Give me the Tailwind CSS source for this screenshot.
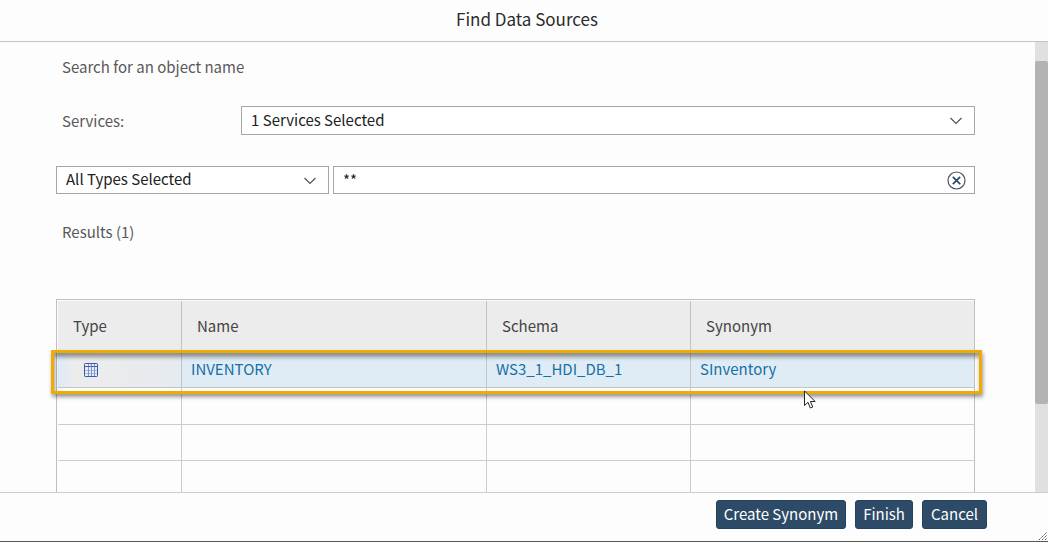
<!DOCTYPE html>
<html lang="en">
<head>
<meta charset="utf-8">
<meta name="viewport" content="width=device-width, initial-scale=1">
<title>Find Data Sources</title>
<script src="https://cdn.jsdelivr.net/npm/@tailwindcss/browser@4"></script>
</head>
<body class="flex h-screen flex-col overflow-hidden border-b border-[#555] bg-[#fdfdfd] font-['Noto_Sans_CJK_SC','Noto_Sans',sans-serif] text-[15px] leading-5 text-[#595959]">
  <header class="flex h-[42px] shrink-0 items-center justify-center border-b border-[#c4c4c4] pb-1 pl-1.5">
    <h1 class="text-[17px] leading-5 text-[#2b2b2b]">Find Data Sources</h1>
  </header>

  <div class="flex min-h-0 flex-1">
    <main class="min-w-0 flex-1 overflow-hidden pt-[15px] pr-[60px] pl-14">
      <p class="pl-1.5">Search for an object name</p>

      <div class="mt-[29px] flex items-center pl-1.5">
        <label for="services" class="w-[179px] shrink-0">Services:</label>
        <div class="relative flex-1">
          <select id="services" class="block h-[29px] w-full appearance-none border border-[#a6a6a6] bg-white pr-10 pb-0.5 pl-[9px] text-[#222]">
            <option>1 Services Selected</option>
          </select>
          <svg class="pointer-events-none absolute top-[11px] right-[13px] h-2 w-3" viewBox="0 0 12 8" fill="none" stroke="#4a4f57" stroke-width="1.1" aria-hidden="true"><path d="M.5 1 6 6.500 11.500 1"/></svg>
        </div>
      </div>

      <div class="mt-[31px] flex gap-1">
        <div class="relative w-[273px] shrink-0">
          <select id="types" aria-label="Object types" class="block h-7 w-full appearance-none border border-[#a6a6a6] bg-white pr-10 pb-0.5 pl-[9px] text-[#222]">
            <option>All Types Selected</option>
          </select>
          <svg class="pointer-events-none absolute top-[11px] right-[13px] h-2 w-3" viewBox="0 0 12 8" fill="none" stroke="#4a4f57" stroke-width="1.1" aria-hidden="true"><path d="M.5 1 6 6.500 11.500 1"/></svg>
        </div>
        <div class="flex h-7 min-w-0 flex-1 items-center border border-[#a6a6a6] bg-white pr-2 pl-[9px]">
          <input type="text" aria-label="Object name" value="**" class="min-w-0 flex-1 bg-transparent text-[#222] outline-none">
          <button type="button" aria-label="Clear search">
            <svg class="block size-[19px]" viewBox="0 0 19 19" fill="none" aria-hidden="true"><circle cx="9.500" cy="9.500" r="8.500" stroke="#4a5260" stroke-width="1.200"/><path d="m5.800 5.800 7.400 7.400M13.200 5.800l-7.400 7.400" stroke="#2c4a6b" stroke-width="1.700"/></svg>
          </button>
        </div>
      </div>

      <h2 class="mt-7 pl-1.5">Results (1)</h2>

      <div class="relative mt-[57px]">
        <table class="w-full table-fixed border-separate border-spacing-0 border border-[#bfbfbf] pt-px pl-px text-left">
          <colgroup><col class="w-[124px]"><col class="w-[305px]"><col class="w-[204px]"><col></colgroup>
          <thead class="bg-[#ececec] text-[#444]">
            <tr class="h-[51px]">
              <th class="border-r border-[#c4c4c4] pb-0.5 pl-[15px] font-normal">Type</th>
              <th class="border-r border-[#c4c4c4] pb-0.5 pl-[15px] font-normal">Name</th>
              <th class="border-r border-[#c4c4c4] pb-0.5 pl-[15px] font-normal">Schema</th>
              <th class="pb-0.5 pl-[15px] font-normal">Synonym</th>
            </tr>
          </thead>
          <tbody>
            <tr class="h-9 bg-[#e0ecf5] text-[#1770a6]">
              <td class="border-r border-b border-[#c4c4c4] bg-linear-to-r from-[#e0ecf5] from-5% via-[#ececec] via-12% to-[#e6ebf0] pl-[26px]">
                <svg class="block size-3.5" viewBox="0 0 14 14" role="img" aria-label="Table"><path fill="#e4ebf8" d="M.5.5h13v13H.5z"/><path fill="none" stroke="#a9badf" d="M1 7.500h12M1 10.500h12"/><path fill="none" stroke="#7f96cc" d="M4.500 1v12M7.500 1v12M10.500 1v12"/><path fill="none" stroke="#4a62a6" d="M1 3.500h12"/><rect x=".5" y=".5" width="13" height="13" rx=".8" fill="none" stroke="#3d58a5"/></svg>
              </td>
              <td class="border-r border-b border-[#c4c4c4] pb-0.5 pl-[9px]">INVENTORY</td>
              <td class="border-r border-b border-[#c4c4c4] pb-0.5 pl-[9px]">WS3_1_HDI_DB_1</td>
              <td class="border-b border-[#c4c4c4] pb-0.5 pl-[9px]">SInventory</td>
            </tr>
            <tr class="h-[37px]"><td class="border-r border-b border-[#ccc]"></td><td class="border-r border-b border-[#ccc]"></td><td class="border-r border-b border-[#ccc]"></td><td class="border-b border-[#ccc]"></td></tr>
            <tr class="h-9"><td class="border-r border-b border-[#ccc]"></td><td class="border-r border-b border-[#ccc]"></td><td class="border-r border-b border-[#ccc]"></td><td class="border-b border-[#ccc]"></td></tr>
            <tr class="h-9"><td class="border-r border-b border-[#ccc]"></td><td class="border-r border-b border-[#ccc]"></td><td class="border-r border-b border-[#ccc]"></td><td class="border-b border-[#ccc]"></td></tr>
          </tbody>
        </table>
        <div class="pointer-events-none absolute top-[51px] -right-[7px] -left-[5px] h-11 border-3 border-[#f0ab00] shadow-[1px_3px_4px_rgb(0_0_0/0.4),inset_1px_4px_4px_rgb(0_0_0/0.4)]"></div>
        <svg class="pointer-events-none absolute top-[91px] left-[748px] h-[19px] w-3" viewBox="0 0 12 19" aria-hidden="true"><path d="M.5 1v14.500L4 12.300l2.300 5.700 2.500-1-2.400-5.500h4.800z" fill="#fff" stroke="#22252b"/></svg>
      </div>
    </main>
    <div class="w-[13px] shrink-0 bg-[#e0e0e0] pt-[19px]" aria-hidden="true">
      <div class="h-[343px] rounded-xs bg-[#b3b3b3]"></div>
    </div>
  </div>

  <footer class="relative flex h-[49px] shrink-0 justify-end gap-[9px] border-t border-[#ccc] pt-[7px] pr-[61px] text-white">
    <button type="button" class="h-[29px] rounded-[3px] border border-[#24415f] bg-[#2d4a67] px-[7px] pb-px">Create Synonym</button>
    <button type="button" class="h-[29px] rounded-[3px] border border-[#24415f] bg-[#2d4a67] px-[7px] pb-px">Finish</button>
    <button type="button" class="h-[29px] rounded-[3px] border border-[#24415f] bg-[#2d4a67] px-2 pb-px">Cancel</button>
    <svg class="absolute right-0 bottom-0 size-2.5" viewBox="0 0 10 10" stroke="#555" stroke-dasharray="1.500 .7" aria-hidden="true"><path d="m1 9 8-8M4 9l5-5M7 9l2-2"/></svg>
  </footer>
</body>
</html>
